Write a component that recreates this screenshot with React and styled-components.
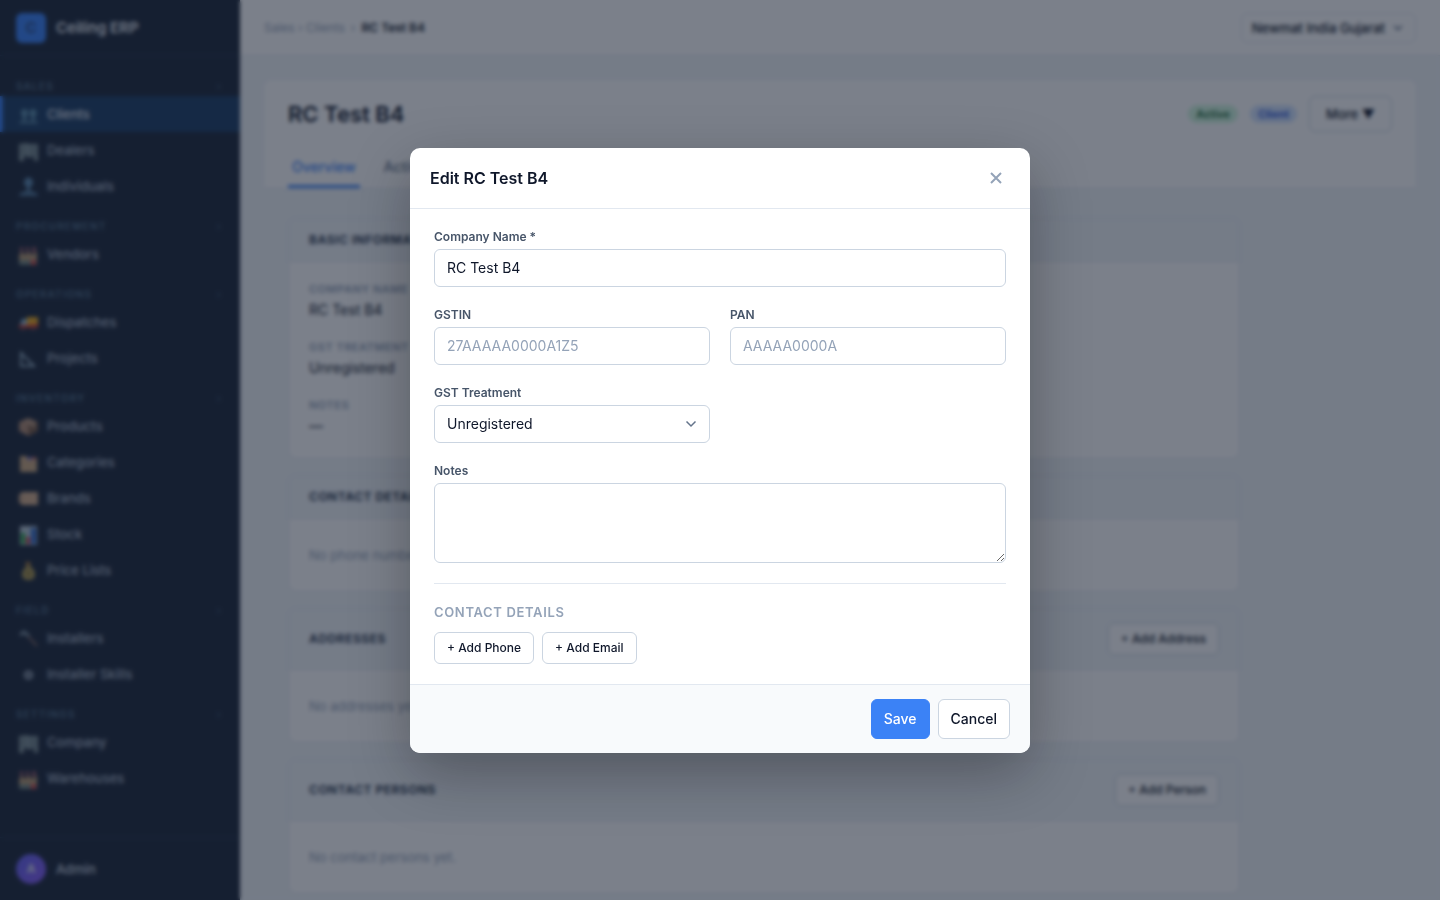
import React, { useState } from 'react';
import styled, { createGlobalStyle } from 'styled-components';

const Color = {
	navy: '#1e293b',
	ink: '#0f172a',
	slate: '#475569',
	muted: '#94a3b8',
	line: '#e2e8f0',
	field: '#cbd5e1',
	page: '#f1f5f9',
	soft: '#f8fafc',
	blue: '#3b82f6',
};

const GlobalStyle = createGlobalStyle`
	*, *::before, *::after {
		box-sizing: border-box;
	}
	body {
		margin: 0;
		overflow: hidden;
		background: ${Color.page};
		color: ${Color.ink};
		font-family: Inter, "Liberation Sans", sans-serif;
		font-size: 14px;
		line-height: 20px;
	}
	button, input, select, textarea {
		font: inherit;
		color: inherit;
	}
	h1, h2, h3, p, dl, dd {
		margin: 0;
	}
	a {
		color: inherit;
		text-decoration: none;
	}
`;

const Shell = styled.div`
	display: flex;
	min-height: 100vh;
`;

/* ---------- sidebar ---------- */

const SidebarBox = styled.aside`
	flex: 0 0 240px;
	display: flex;
	flex-direction: column;
	height: 100vh;
	background: ${Color.navy};
	color: ${Color.field};
`;

const Brand = styled.div`
	display: flex;
	align-items: center;
	gap: 10px;
	height: 56px;
	padding: 0 16px;
	border-bottom: 1px solid #263950;
	color: #e9eef5;
	font-size: 15px;
	font-weight: 600;
`;

const BrandMark = styled.span`
	display: flex;
	align-items: center;
	justify-content: center;
	width: 30px;
	height: 30px;
	border-radius: 6px;
	background: ${Color.blue};
	color: #2b4f8a;
	font-weight: 700;
`;

const NavList = styled.nav`
	flex: 1 1 auto;
	padding-top: 8px;
	overflow: hidden;
`;

const GroupHead = styled.button`
	display: flex;
	align-items: flex-end;
	justify-content: space-between;
	width: 100%;
	height: 32px;
	padding: 0 18px 2px 16px;
	border: 0;
	background: none;
	color: #52708a;
	font-size: 10px;
	font-weight: 600;
	line-height: 16px;
	letter-spacing: 0.12em;
	text-transform: uppercase;

	span {
		opacity: 0.7;
	}
`;

const NavItem = styled.a`
	display: flex;
	align-items: center;
	gap: 8px;
	height: 36px;
	padding: 0 16px;
	border-left: 3px solid ${(props) => (props.$active ? Color.blue : 'transparent')};
	background: ${(props) => (props.$active ? '#1e3f66' : 'none')};
	color: ${(props) => (props.$active ? '#e2e8f0' : '#a9b6c7')};
	font-size: 13px;
	font-weight: 500;
`;

const UserBox = styled.div`
	display: flex;
	align-items: center;
	gap: 10px;
	padding: 16px;
	border-top: 1px solid #263950;
	font-size: 13px;
	font-weight: 500;
`;

const Avatar = styled.span`
	display: flex;
	align-items: center;
	justify-content: center;
	width: 30px;
	height: 30px;
	border-radius: 50%;
	background: linear-gradient(135deg, #6366f1, #8b5cf6);
	color: #e2e8f0;
	font-size: 12px;
	font-weight: 600;
`;

/* ---------- page ---------- */

const Main = styled.main`
	flex: 1 1 auto;
	min-width: 0;
`;

const TopBar = styled.header`
	display: flex;
	align-items: center;
	justify-content: space-between;
	height: 56px;
	padding: 0 24px;
	border-bottom: 1px solid ${Color.line};
	background: #fff;
`;

const Crumbs = styled.div`
	display: flex;
	gap: 6px;
	color: ${Color.muted};
	font-size: 12px;

	strong {
		color: ${Color.ink};
		font-weight: 600;
	}
`;

const CompanySwitch = styled.button`
	display: flex;
	align-items: center;
	gap: 8px;
	height: 30px;
	padding: 0 12px 0 10px;
	border: 1px solid ${Color.line};
	border-radius: 6px;
	background: #fff;
	font-size: 13px;
	font-weight: 500;
`;

const Content = styled.div`
	padding: 24px;
`;

const RecordHead = styled.section`
	padding: 16px 24px 0;
	border-radius: 8px 8px 0 0;
	border-bottom: 1px solid ${Color.line};
	background: #fff;
`;

const TitleRow = styled.div`
	display: flex;
	align-items: center;
	gap: 12px;
	height: 36px;
`;

const Title = styled.h1`
	flex: 1 1 auto;
	font-size: 22px;
	font-weight: 600;
	line-height: 28px;
`;

const Badge = styled.span`
	padding: 0 8px;
	border-radius: 9px;
	background: ${(props) => (props.$tone === 'green' ? '#d1f7df' : '#d3e4fe')};
	color: ${(props) => (props.$tone === 'green' ? '#166534' : '#1d4ed8')};
	font-size: 11px;
	font-weight: 600;
	line-height: 18px;
`;

const MoreButton = styled.button`
	height: 36px;
	padding: 0 16px;
	border: 1px solid ${Color.field};
	border-radius: 6px;
	background: #fff;
	font-size: 13px;
	font-weight: 500;
`;

const Tabs = styled.div`
	display: flex;
	gap: 20px;
	margin-top: 20px;
`;

const Tab = styled.button`
	height: 36px;
	padding: 0 4px 4px;
	border: 0;
	border-bottom: 3px solid ${(props) => (props.$active ? Color.blue : 'transparent')};
	background: none;
	color: ${(props) => (props.$active ? Color.blue : '#64748b')};
	font-weight: 500;
`;

const Cards = styled.div`
	display: flex;
	flex-direction: column;
	gap: 16px;
	max-width: 1000px;
	padding: 29px 24px 0;
`;

const CardBox = styled.section`
	border: 1px solid ${Color.line};
	border-radius: 8px;
	background: #fff;
	overflow: hidden;
`;

const CardHead = styled.div`
	display: flex;
	align-items: center;
	justify-content: space-between;
	padding: ${(props) => (props.$action ? '14px 20px' : '12px 20px')};
	border-bottom: 1px solid ${Color.line};
	background: ${Color.page};

	h2 {
		color: #334155;
		font-size: 12px;
		font-weight: 700;
		line-height: 18px;
		letter-spacing: 0.5px;
		text-transform: uppercase;
	}
`;

const CardBody = styled.div`
	padding: ${(props) => (props.$fields ? '18px 20px 20px' : '26px 20px')};
	color: ${Color.muted};
	font-size: 13px;
`;

const Fields = styled.dl`
	display: grid;
	gap: 16px;

	dt {
		color: ${Color.muted};
		font-size: 11px;
		font-weight: 600;
		line-height: 18px;
		letter-spacing: 0.5px;
		text-transform: uppercase;
	}
	dd {
		color: ${Color.ink};
		font-size: 14px;
		line-height: 24px;
	}
`;

/* ---------- modal ---------- */

const Overlay = styled.div`
	position: fixed;
	inset: 0;
	display: flex;
	align-items: center;
	justify-content: center;
	background: rgba(15, 23, 42, 0.55);
	backdrop-filter: blur(2px);
`;

const Dialog = styled.form`
	width: 620px;
	max-width: 94vw;
	border-radius: 10px;
	background: #fff;
	box-shadow: 0 20px 60px rgba(0, 0, 0, 0.3);
	overflow: hidden;
`;

const DialogHead = styled.div`
	display: flex;
	align-items: center;
	justify-content: space-between;
	padding: 16px 20px;
	border-bottom: 1px solid ${Color.line};

	h2 {
		font-size: 16px;
		font-weight: 600;
		line-height: 24px;
	}
`;

const CloseButton = styled.button`
	display: flex;
	align-items: center;
	justify-content: center;
	width: 28px;
	height: 28px;
	padding: 0;
	border: 0;
	background: none;
	color: ${Color.muted};
`;

const DialogBody = styled.div`
	display: grid;
	grid-template-columns: 1fr 1fr;
	gap: 20px;
	padding: 20px 24px;
`;

const Field = styled.div`
	display: flex;
	flex-direction: column;
	gap: 4px;
	grid-column: ${(props) => (props.$wide ? '1 / -1' : 'auto')};

	label {
		color: ${Color.slate};
		font-size: 12px;
		font-weight: 600;
		line-height: 16px;
	}
`;

const Input = styled.input`
	width: 100%;
	height: 38px;
	padding: 0 12px;
	border: 1px solid ${Color.field};
	border-radius: 6px;
	background: #fff;
	outline: none;

	&::placeholder {
		color: ${Color.muted};
	}
`;

const Select = styled(Input).attrs({ as: 'select' })`
	grid-area: 1 / 1;
	appearance: none;
`;

const SelectWrap = styled.div`
	display: grid;
	align-items: center;

	svg {
		grid-area: 1 / 1;
		justify-self: end;
		margin-right: 13px;
		pointer-events: none;
	}
`;

const TextArea = styled(Input).attrs({ as: 'textarea' })`
	display: block;
	height: 80px;
	padding: 8px 12px;
	resize: vertical;
`;

const ContactSection = styled.div`
	grid-column: 1 / -1;
	padding-top: 20px;
	border-top: 1px solid ${Color.line};

	h3 {
		color: ${Color.muted};
		font-size: 13px;
		font-weight: 600;
		line-height: 16px;
		letter-spacing: 0.05em;
		text-transform: uppercase;
	}
`;

const ButtonRow = styled.div`
	display: flex;
	gap: 8px;
	margin-top: 12px;
`;

const Button = styled.button`
	height: ${(props) => (props.$small ? '32px' : '40px')};
	padding: 0 12px;
	border: 1px solid ${(props) => (props.$primary ? Color.blue : Color.field)};
	border-radius: 6px;
	background: ${(props) => (props.$primary ? Color.blue : '#fff')};
	color: ${(props) => (props.$primary ? '#fff' : Color.ink)};
	font-size: ${(props) => (props.$small ? '12px' : '14px')};
	font-weight: 500;
`;

const DialogFoot = styled.div`
	display: flex;
	justify-content: flex-end;
	gap: 8px;
	padding: 14px 20px;
	border-top: 1px solid ${Color.line};
	background: ${Color.soft};
`;

/* ---------- icons ---------- */

const icons = {
	people: (
		<g fill="#5c8eac">
			<ellipse cx="5.5" cy="11" rx="3.5" ry="4" />
			<ellipse cx="14" cy="11" rx="3.5" ry="4" />
			<path d="M4 14h3v4H4zM12.5 14h3v4h-3z" />
			<path d="M0 22c0-3 2.5-4 5.5-4s4 1 4.3 2c.3-1 1.3-2 4.2-2 3 0 5 1 5 4z" opacity="0.7" />
		</g>
	),
	person: (
		<g fill="#5b87ad">
			<ellipse cx="9.5" cy="8.5" rx="4.5" ry="5" />
			<path d="M8 12h3v5H8z" />
			<path d="M0 22c0-3 4-5 9.5-5s9.5 2 9.5 5z" opacity="0.8" />
		</g>
	),
	office: (
		<g>
			<path d="M0 6l9-1v1h10v17h-4v-5h-3v2H9v-2H5v5H0z" fill="#7f9197" />
			<path d="M2 9h4M2 12h4M2 15h4M11 9h6M11 12h6M11 15h6" stroke="#586a74" />
		</g>
	),
	factory: (
		<g>
			<path d="M1 5h3v6H1zM7 5h3v6H7zM13 5h4v6h-4z" fill="#8d5663" />
			<path d="M0 13l3-3 3 3 4-3 3 3 5-3v9H0z" fill="#b89a72" />
			<path d="M0 18h18v5H0z" fill="#74857f" />
			<path d="M12 18h5v5h-5z" fill="#d44a45" />
		</g>
	),
	truck: (
		<g>
			<path d="M8 7h11v9H7z" fill="#eaa820" />
			<path d="M3 9h5v6H1z" fill="#8eb5cc" />
			<path d="M0 15h8l11-1v4H0z" fill="#c93a2c" />
			<circle cx="4" cy="19" r="2" fill="#59424d" />
			<circle cx="14" cy="19" r="2" fill="#59424d" />
		</g>
	),
	ruler: <path d="M2 7v13h13z" fill="none" stroke="#8fa9bc" strokeWidth="2" />,
	box: (
		<g>
			<path d="M9.5 4L19 8v9l-9.5 5L0 17V8z" fill="#b08b72" />
			<path d="M9.5 12L19 8v9l-9.5 5z" fill="#755844" />
			<path d="M4 6.5l9 4v4l3-1.5V9L7 5z" fill="#b99a80" />
		</g>
	),
	dividers: (
		<g>
			<path d="M1 6h6l2 2h9v14H1z" fill="#caa87f" />
			<path d="M8 7h5v3H8z" fill="#7872b5" />
			<path d="M13 7h4v3h-4z" fill="#bd6a68" />
		</g>
	),
	tag: (
		<g>
			<path d="M3 6h16v13H3l-3-3V9z" fill="#d3ae8b" />
			<circle cx="3" cy="12.5" r="1" fill="#806b5d" />
		</g>
	),
	chart: (
		<g>
			<path d="M1 4h17v19H1z" fill="#b5c5d2" />
			<path d="M2 11h4v11H2z" fill="#27a34a" />
			<path d="M7 15h4v7H7z" fill="#c2404a" />
			<path d="M12 6h5v16h-5z" fill="#2b66c8" />
		</g>
	),
	money: (
		<g>
			<path d="M6 4h6l-1.5 4h-3z" fill="#b07f3c" />
			<path d="M8 8h3c3 2 5 5 5 8 0 4-2 6-6.5 6S3 20 3 16c0-3 2-6 5-8z" fill="#aa9650" />
			<path d="M8 13h3v5H8z" fill="#857336" />
		</g>
	),
	hammer: (
		<g fill="none">
			<path d="M8 9l10 11" stroke="#7d6560" strokeWidth="2" />
			<path d="M1 9l4-3 5 4" stroke="#7b8f9e" strokeWidth="3" />
		</g>
	),
	gear: (
		<g fill="none" stroke="#a9b6c7">
			<circle cx="9.5" cy="13" r="3" strokeWidth="2" />
			<circle cx="9.5" cy="13" r="4.5" strokeDasharray="1.5 2" />
		</g>
	),
};

const NavIcon = ({ name }) => (
	<svg width="20" height="24" viewBox="0 0 20 24" aria-hidden="true">{icons[name]}</svg>
);

const Chevron = ({ size = 12, width = 2 }) => (
	<svg width={size} height={size} viewBox="0 0 12 12" fill="none" stroke="#64748b" strokeWidth={width} aria-hidden="true">
		<path d="M1.5 3.5L6 8l4.5-4.5" />
	</svg>
);

const groups = [
	{ name: 'Sales', items: [['people', 'Clients'], ['office', 'Dealers'], ['person', 'Individuals']] },
	{ name: 'Procurement', items: [['factory', 'Vendors']] },
	{ name: 'Operations', items: [['truck', 'Dispatches'], ['ruler', 'Projects']] },
	{
		name: 'Inventory',
		items: [['box', 'Products'], ['dividers', 'Categories'], ['tag', 'Brands'], ['chart', 'Stock'], ['money', 'Price Lists']],
	},
	{ name: 'Field', items: [['hammer', 'Installers'], ['gear', 'Installer Skills']] },
	{ name: 'Settings', items: [['office', 'Company'], ['factory', 'Warehouses']] },
];

const Sidebar = () => (
	<SidebarBox>
		<Brand>
			<BrandMark>C</BrandMark>
			Ceiling ERP
		</Brand>
		<NavList>
			{groups.map((group) => (
				<div key={group.name}>
					<GroupHead type="button">
						{group.name}
						<span>›</span>
					</GroupHead>
					{group.items.map(([icon, label]) => (
						<NavItem href="#" key={label} $active={label === 'Clients'}>
							<NavIcon name={icon} />
							{label}
						</NavItem>
					))}
				</div>
			))}
		</NavList>
		<UserBox>
			<Avatar>A</Avatar>
			Admin
		</UserBox>
	</SidebarBox>
);

const Card = ({ title, action, fields, children }) => (
	<CardBox>
		<CardHead $action={action}>
			<h2>{title}</h2>
			{action && <Button type="button" $small>{action}</Button>}
		</CardHead>
		<CardBody $fields={fields}>{children}</CardBody>
	</CardBox>
);

const ClientPage = () => (
	<Main>
		<TopBar>
			<Crumbs>
				<a href="#">Sales › Clients</a>
				<span>›</span>
				<strong>RC Test B4</strong>
			</Crumbs>
			<CompanySwitch type="button">
				Newmat India Gujarat
				<Chevron size={10} />
			</CompanySwitch>
		</TopBar>
		<Content>
			<RecordHead>
				<TitleRow>
					<Title>RC Test B4</Title>
					<Badge $tone="green">Active</Badge>
					<Badge $tone="blue">Client</Badge>
					<MoreButton type="button">More ▼</MoreButton>
				</TitleRow>
				<Tabs>
					<Tab type="button" $active>Overview</Tab>
					<Tab type="button">Activity</Tab>
				</Tabs>
			</RecordHead>
			<Cards>
				<Card title="Basic Information" fields>
					<Fields>
						<div><dt>Company Name</dt><dd>RC Test B4</dd></div>
						<div><dt>GST Treatment</dt><dd>Unregistered</dd></div>
						<div><dt>Notes</dt><dd>—</dd></div>
					</Fields>
				</Card>
				<Card title="Contact Details">No phone numbers yet.</Card>
				<Card title="Addresses" action="+ Add Address">No addresses yet.</Card>
				<Card title="Contact Persons" action="+ Add Person">No contact persons yet.</Card>
			</Cards>
		</Content>
	</Main>
);

function EditDialog() {
	const [name, setName] = useState('RC Test B4');

	return (
		<Overlay>
			<Dialog role="dialog" aria-labelledby="dialog-title" onSubmit={(e) => e.preventDefault()}>
				<DialogHead>
					<h2 id="dialog-title">Edit RC Test B4</h2>
					<CloseButton type="button" aria-label="Close">
						<svg width="12" height="12" viewBox="0 0 12 12" stroke="currentColor" strokeWidth="2">
							<path d="M1 1l10 10M11 1L1 11" />
						</svg>
					</CloseButton>
				</DialogHead>
				<DialogBody>
					<Field $wide>
						<label htmlFor="company">Company Name *</label>
						<Input id="company" value={name} onChange={(e) => setName(e.target.value)} />
					</Field>
					<Field>
						<label htmlFor="gstin">GSTIN</label>
						<Input id="gstin" placeholder="27AAAAA0000A1Z5" />
					</Field>
					<Field>
						<label htmlFor="pan">PAN</label>
						<Input id="pan" placeholder="AAAAA0000A" />
					</Field>
					<Field>
						<label htmlFor="treatment">GST Treatment</label>
						<SelectWrap>
							<Select id="treatment" defaultValue="Unregistered">
								<option>Unregistered</option>
								<option>Registered</option>
							</Select>
							<Chevron width={1.5} />
						</SelectWrap>
					</Field>
					<Field $wide>
						<label htmlFor="notes">Notes</label>
						<TextArea id="notes" />
					</Field>
					<ContactSection>
						<h3>Contact Details</h3>
						<ButtonRow>
							<Button type="button" $small>+ Add Phone</Button>
							<Button type="button" $small>+ Add Email</Button>
						</ButtonRow>
					</ContactSection>
				</DialogBody>
				<DialogFoot>
					<Button type="submit" $primary>Save</Button>
					<Button type="button">Cancel</Button>
				</DialogFoot>
			</Dialog>
		</Overlay>
	);
}

export default function App() {
	return (
		<>
			<GlobalStyle />
			<Shell>
				<Sidebar />
				<ClientPage />
			</Shell>
			<EditDialog />
		</>
	);
}
